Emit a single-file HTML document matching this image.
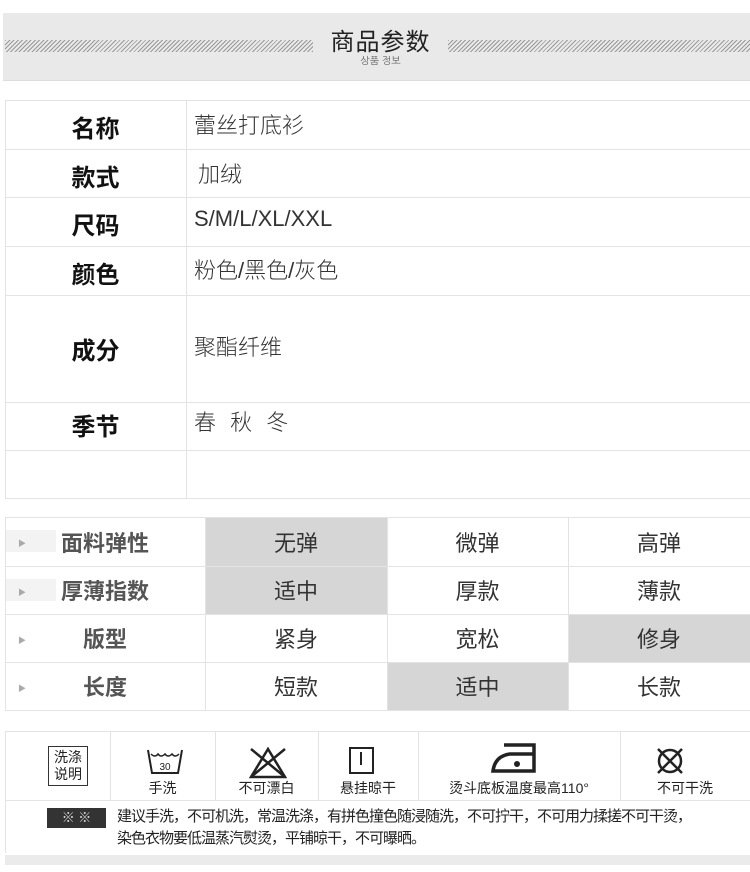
<!DOCTYPE html>
<html><head><meta charset="utf-8"><style>
*{margin:0;padding:0;box-sizing:border-box}
body{width:750px;height:872px;background:#fff;position:relative;overflow:hidden;font-family:"Liberation Sans","Noto Sans CJK SC",sans-serif}
.abs{position:absolute}
.band{left:3px;top:13px;width:747px;height:68px;background:#e9e9e9;border-bottom:1px solid #ddd}
.hatch{top:40px;height:12px;background:repeating-linear-gradient(135deg,#999 0 1px,#e9e9e9 1px 3px)}
.t1 .lab{position:absolute;left:5px;width:181px;text-align:center;font-weight:bold;font-size:24px;color:#111}
.t1 .val{position:absolute;left:194px;font-size:22px;color:#333;font-weight:300}
.hl{position:absolute;height:1px;background:#e3e3e3}
.vl{position:absolute;width:1px;background:#e3e3e3}
.c{position:absolute;text-align:center;font-size:22px;color:#333}
.g{background:#d6d6d6}
.ll{position:absolute;left:5px;width:200px;text-align:center;font-weight:bold;font-size:22px;color:#555}
.tri{position:absolute;left:18px;font-size:8px;color:#aaa}
.ic{position:absolute;text-align:center;font-size:14px;color:#222}
</style></head><body>
<div class="abs band"></div>
<div class="abs hatch" style="left:5px;width:308px"></div>
<div class="abs hatch" style="left:448px;width:302px"></div>
<div class="abs" style="left:313px;width:135px;top:22px;text-align:center;font-size:24px;color:#222;letter-spacing:1px">商品参数</div>
<div class="abs" style="left:313px;width:135px;top:55px;text-align:center;font-size:10px;color:#666;font-family:'NanumGothic',sans-serif">상품 정보</div>

<div class="t1">
<div class="hl" style="left:5px;width:745px;top:100px"></div>
<div class="hl" style="left:5px;width:745px;top:149px"></div>
<div class="hl" style="left:5px;width:745px;top:197px"></div>
<div class="hl" style="left:5px;width:745px;top:246px"></div>
<div class="hl" style="left:5px;width:745px;top:295px"></div>
<div class="hl" style="left:5px;width:745px;top:402px"></div>
<div class="hl" style="left:5px;width:745px;top:450px"></div>
<div class="hl" style="left:5px;width:745px;top:498px"></div>
<div class="vl" style="left:5px;top:100px;height:398px"></div>
<div class="vl" style="left:186px;top:100px;height:398px"></div>
<div class="lab" style="top:109px">名称</div><div class="val" style="top:108px">蕾丝打底衫</div>
<div class="lab" style="top:158px">款式</div><div class="val" style="top:157px;left:198px">加绒</div>
<div class="lab" style="top:206px">尺码</div><div class="val" style="top:206px">S/M/L/XL/XXL</div>
<div class="lab" style="top:255px">颜色</div><div class="val" style="top:253px">粉色/黑色/灰色</div>
<div class="lab" style="top:331px">成分</div><div class="val" style="top:330px">聚酯纤维</div>
<div class="lab" style="top:407px">季节</div><div class="val" style="top:405px;letter-spacing:4px">春 秋 冬</div>
</div>

<div class="abs g" style="left:205px;top:517px;width:182px;height:97px"></div>
<div class="abs g" style="left:568px;top:614px;width:182px;height:48px"></div>
<div class="abs g" style="left:387px;top:662px;width:181px;height:48px"></div>
<div class="abs" style="left:6px;top:530px;width:50px;height:22px;background:#f3f3f3"></div>
<div class="abs" style="left:6px;top:579px;width:50px;height:22px;background:#f3f3f3"></div>
<div class="hl" style="left:5px;width:745px;top:517px"></div>
<div class="hl" style="left:5px;width:745px;top:566px"></div>
<div class="hl" style="left:5px;width:745px;top:614px"></div>
<div class="hl" style="left:5px;width:745px;top:662px"></div>
<div class="hl" style="left:5px;width:745px;top:710px"></div>
<div class="vl" style="left:5px;top:517px;height:193px"></div>
<div class="vl" style="left:205px;top:517px;height:193px"></div>
<div class="vl" style="left:387px;top:517px;height:193px"></div>
<div class="vl" style="left:568px;top:517px;height:193px"></div>
<div class="tri" style="top:538px">▶</div><div class="tri" style="top:587px">▶</div><div class="tri" style="top:635px">▶</div><div class="tri" style="top:683px">▶</div>
<div class="ll" style="top:526px">面料弹性</div><div class="ll" style="top:574px">厚薄指数</div><div class="ll" style="top:622px">版型</div><div class="ll" style="top:670px">长度</div>
<div class="c" style="left:205px;width:182px;top:526px">无弹</div><div class="c" style="left:387px;width:181px;top:526px">微弹</div><div class="c" style="left:568px;width:182px;top:526px">高弹</div>
<div class="c" style="left:205px;width:182px;top:574px">适中</div><div class="c" style="left:387px;width:181px;top:574px">厚款</div><div class="c" style="left:568px;width:182px;top:574px">薄款</div>
<div class="c" style="left:205px;width:182px;top:622px">紧身</div><div class="c" style="left:387px;width:181px;top:622px">宽松</div><div class="c" style="left:568px;width:182px;top:622px">修身</div>
<div class="c" style="left:205px;width:182px;top:670px">短款</div><div class="c" style="left:387px;width:181px;top:670px">适中</div><div class="c" style="left:568px;width:182px;top:670px">长款</div>

<div class="hl" style="left:5px;width:745px;top:731px"></div>
<div class="hl" style="left:5px;width:745px;top:800px"></div>
<div class="vl" style="left:5px;top:731px;height:122px"></div>
<div class="vl" style="left:110px;top:731px;height:69px"></div>
<div class="vl" style="left:215px;top:731px;height:69px"></div>
<div class="vl" style="left:318px;top:731px;height:69px"></div>
<div class="vl" style="left:418px;top:731px;height:69px"></div>
<div class="vl" style="left:620px;top:731px;height:69px"></div>
<div class="abs" style="left:48px;top:746px;width:40px;height:40px;border:1.5px solid #333;font-size:14px;line-height:17px;text-align:center;padding-top:2px;color:#222">洗涤<br>说明</div>
<svg class="abs" style="left:146px;top:748px" width="38" height="28" viewBox="0 0 38 28"><path d="M2 2 L6 25 H32 L36 2" fill="none" stroke="#222" stroke-width="2"/><path d="M5 6 q4 4 7 0 q3 4 7 0 q3 4 7 0 q3 4 7 0" fill="none" stroke="#222" stroke-width="1.5"/><text x="19" y="22" font-size="10" text-anchor="middle" fill="#222" font-family="Liberation Sans">30</text></svg>
<div class="ic" style="left:110px;width:105px;top:778px">手洗</div>
<svg class="abs" style="left:245px;top:745px" width="46" height="34" viewBox="0 0 46 34"><path d="M23 4 L6 32 H40 Z" fill="none" stroke="#222" stroke-width="2.5"/><path d="M6 4 L40 32 M40 4 L6 32" stroke="#222" stroke-width="2.5"/></svg>
<div class="ic" style="left:215px;width:103px;top:778px">不可漂白</div>
<div class="abs" style="left:349px;top:747px;width:25px;height:27px;border:2px solid #222"></div><div class="abs" style="left:360px;top:752px;width:2px;height:13px;background:#222"></div>
<div class="ic" style="left:318px;width:100px;top:778px">悬挂晾干</div>
<svg class="abs" style="left:490px;top:742px" width="50" height="32" viewBox="0 0 50 32"><path d="M14 3 H44 V29 H3 Q5 14 20 12 H44" fill="none" stroke="#222" stroke-width="3.5"/><circle cx="27" cy="22" r="3" fill="#222"/></svg>
<div class="ic" style="left:418px;width:202px;top:778px">烫斗底板温度最高110°</div>
<svg class="abs" style="left:654px;top:746px" width="32" height="30" viewBox="0 0 32 30"><circle cx="16" cy="15" r="11" fill="none" stroke="#222" stroke-width="2.5"/><path d="M4 3 L28 27 M28 3 L4 27" stroke="#222" stroke-width="2.5"/></svg>
<div class="ic" style="left:620px;width:130px;top:778px">不可干洗</div>
<div class="abs" style="left:47px;top:808px;width:59px;height:20px;background:#333;color:#ddd;font-size:13px;text-align:center;line-height:20px">※ ※</div>
<div class="abs" style="left:117px;top:806px;font-size:15px;color:#222;line-height:22px;letter-spacing:-1px;white-space:nowrap">建议手洗，不可机洗，常温洗涤，有拼色撞色随浸随洗，不可拧干，不可用力揉搓不可干烫，<br>染色衣物要低温蒸汽熨烫，平铺晾干，不可曝晒。</div>
<div class="abs" style="left:5px;top:855px;width:745px;height:10px;background:#ebebeb"></div>
</body></html>
